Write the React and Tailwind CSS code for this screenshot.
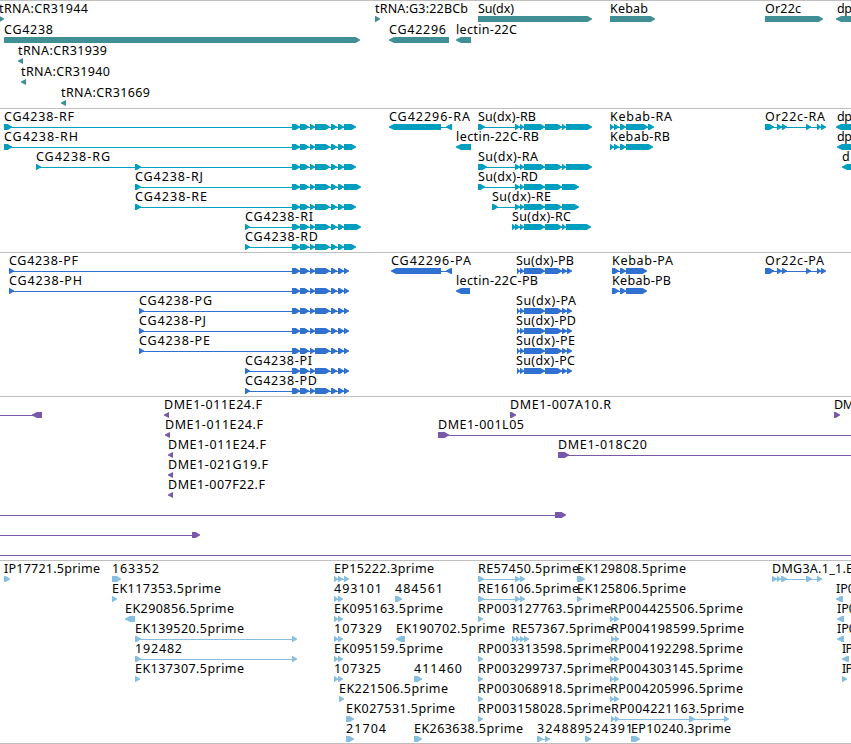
const ROW_HEIGHT = 20;

// Exons shared by every CG4238 isoform, without the last one
const CG4238 = [[292, 300], [300, 309], [310, 315], [315, 330], [331, 337], [338, 344]];
const CG4238_SHORT = [...CG4238, [344, 356]];
const CG4238_LONG = [...CG4238, [344, 361]];
const CG4238_CDS = [...CG4238, [344, 349]];

const SUDX = [[515, 520], [520, 524], [524, 545], [545, 562]];
const SUDX_CDS = [[517, 520], [520, 524], [524, 545], [545, 562], [562, 567], [567, 572]];
const OR22C = [[765, 774], [777, 782], [782, 787], [806, 811], [817, 821], [821, 826]];

// Feature: [row, label, label start, label end, blocks, strand]
const TRACKS = [
  {
    id: "gene",
    height: 107,
    rowHeight: 21,
    color: "#408f94",
    features: [
      [0, "tRNA:CR31944", -1, 88, [[-1, 4]]],
      [0, "tRNA:G3:22BCb", 375, 468, [[375, 380]]],
      [0, "Su(dx)", 478, 514, [[478, 592]]],
      [0, "Kebab", 610, 648, [[610, 655]]],
      [0, "Or22c", 765, 801, [[765, 823]]],
      [0, "dp", 837, 852, [[836, 870]], -1],
      [1, "CG4238", 4, 53, [[4, 360]]],
      [1, "CG42296", 389, 446, [[389, 449]], -1],
      [1, "lectin-22C", 456, 517, [[456, 471]], -1],
      [2, "tRNA:CR31939", 18, 107, [[18, 23]], -1],
      [3, "tRNA:CR31940", 21, 110, [[21, 26]], -1],
      [4, "tRNA:CR31669", 61, 150, [[61, 66]], -1],
    ],
  },
  {
    id: "transcript",
    height: 143,
    color: "#009fc0",
    features: [
      [0, "CG4238-RF", 4, 74, [[4, 12], ...CG4238_SHORT]],
      [1, "CG4238-RH", 4, 78, [[4, 12], ...CG4238_SHORT]],
      [2, "CG4238-RG", 36, 110, [[36, 41], [135, 141], ...CG4238_SHORT]],
      [3, "CG4238-RJ", 135, 203, [[135, 141], ...CG4238_LONG]],
      [4, "CG4238-RE", 135, 207, [[135, 141], ...CG4238_SHORT]],
      [5, "CG4238-RI", 245, 313, [[245, 250], ...CG4238_LONG]],
      [6, "CG4238-RD", 245, 318, [[245, 250], ...CG4238_SHORT]],
      [0, "CG42296-RA", 389, 470, [[389, 441], [446, 452]], -1],
      [1, "lectin-22C-RB", 456, 539, [[456, 471]], -1],
      [0, "Su(dx)-RB", 478, 536, [[478, 485], ...SUDX, [562, 566], [566, 592]]],
      [2, "Su(dx)-RA", 478, 538, [[478, 487], ...SUDX, [562, 566], [566, 592]]],
      [3, "Su(dx)-RD", 478, 538, [[478, 485], ...SUDX, [562, 579]]],
      [4, "Su(dx)-RE", 492, 551, [[492, 498], ...SUDX, [562, 579]]],
      [5, "Su(dx)-RC", 512, 571, [[512, 516], ...SUDX, [562, 566], [566, 591]]],
      [0, "Kebab-RA", 610, 672, [[610, 614], [614, 619], [620, 626], [626, 648], [648, 654]]],
      [1, "Kebab-RB", 610, 670, [[610, 614], [614, 619], [620, 626], [626, 653]]],
      [0, "Or22c-RA", 765, 825, OR22C],
      [0, "dp", 837, 852, [[836, 870]], -1],
      [1, "dp", 837, 852, [[837, 870]], -1],
      [2, "d", 842, 850, [[842, 870]], -1],
    ],
  },
  {
    id: "cds",
    height: 143,
    color: "#3070d0",
    features: [
      [0, "CG4238-PF", 9, 78, [[9, 14], ...CG4238_CDS]],
      [1, "CG4238-PH", 9, 82, [[9, 14], ...CG4238_CDS]],
      [2, "CG4238-PG", 139, 212, [[139, 144], ...CG4238_CDS]],
      [3, "CG4238-PJ", 139, 206, [[139, 144], ...CG4238_CDS]],
      [4, "CG4238-PE", 139, 210, [[139, 144], ...CG4238_CDS]],
      [5, "CG4238-PI", 245, 312, [[245, 250], ...CG4238_CDS]],
      [6, "CG4238-PD", 245, 317, [[245, 250], ...CG4238_CDS]],
      [0, "CG42296-PA", 391, 471, [[391, 441], [446, 452]], -1],
      [1, "lectin-22C-PB", 456, 538, [[456, 470]], -1],
      [0, "Su(dx)-PB", 516, 574, SUDX_CDS],
      [2, "Su(dx)-PA", 516, 576, SUDX_CDS],
      [3, "Su(dx)-PD", 516, 576, SUDX_CDS],
      [4, "Su(dx)-PE", 516, 575, SUDX_CDS],
      [5, "Su(dx)-PC", 516, 575, SUDX_CDS],
      [0, "Kebab-PA", 612, 673, [[612, 619], [620, 626], [626, 647]]],
      [1, "Kebab-PB", 612, 671, [[612, 619], [620, 626], [626, 647]]],
      [0, "Or22c-PA", 765, 824, OR22C],
    ],
  },
  {
    id: "bac",
    height: 163,
    color: "#7858a8",
    features: [
      [0, "", 0, 0, [[-20, -10], [32, 42]], -1],
      [0, "DME1-011E24.F", 164, 262, [[164, 169]], -1],
      [1, "DME1-011E24.F", 165, 263, [[165, 170]], -1],
      [2, "DME1-011E24.F", 168, 266, [[168, 173]], -1],
      [3, "DME1-021G19.F", 168, 268, [[168, 173]], -1],
      [4, "DME1-007F22.F", 168, 265, [[168, 173]], -1],
      [0, "DME1-007A10.R", 510, 611, [[510, 516]]],
      [1, "DME1-001L05", 438, 524, [[438, 449], [860, 870]]],
      [2, "DME1-018C20", 558, 647, [[558, 569], [860, 870]]],
      [0, "DM", 834, 854, [[834, 840]]],
      [5, "", 0, 0, [[-20, -10], [555, 566]]],
      [6, "", 0, 0, [[-20, -10], [192, 200]]],
      [7, "", 0, 0, [[-20, -10], [860, 870]]],
    ],
  },
  {
    id: "est",
    height: 182,
    color: "#88bfe0",
    features: [
      [0, "IP17721.5prime", 4, 100, [[4, 10]]],
      [0, "163352", 112, 159, [[112, 121]]],
      [1, "EK117353.5prime", 112, 221, [[112, 117]]],
      [2, "EK290856.5prime", 125, 234, [[125, 135]], -1],
      [3, "EK139520.5prime", 135, 244, [[135, 141], [292, 297]]],
      [4, "192482", 135, 182, [[135, 141], [292, 297]]],
      [5, "EK137307.5prime", 135, 244, [[135, 140]]],
      [0, "EP15222.3prime", 334, 434, [[334, 338], [338, 343], [344, 349]]],
      [1, "493101", 334, 382, [[334, 338], [338, 343]]],
      [2, "EK095163.5prime", 334, 443, [[334, 338], [338, 343]]],
      [3, "107329", 334, 382, [[334, 338], [338, 343]]],
      [4, "EK095159.5prime", 334, 443, [[334, 338], [338, 343]]],
      [5, "107325", 334, 381, [[334, 338], [338, 343]]],
      [6, "EK221506.5prime", 339, 448, [[339, 344]]],
      [7, "EK027531.5prime", 346, 455, [[346, 354]]],
      [8, "21704", 346, 386, [[346, 354]]],
      [1, "484561", 395, 443, [[395, 402]]],
      [3, "EK190702.5prime", 396, 505, [[396, 405]], -1],
      [5, "411460", 414, 462, [[414, 422]]],
      [8, "EK263638.5prime", 414, 523, [[414, 422]]],
      [0, "RE57450.5prime", 478, 579, [[478, 484], [515, 520], [520, 525]]],
      [1, "RE16106.5prime", 478, 579, [[478, 484], [515, 520], [520, 525]]],
      [2, "RP003127763.5prime", 478, 611, [[478, 483]]],
      [3, "RE57367.5prime", 512, 613, [[512, 516], [516, 520], [520, 524], [524, 529]]],
      [4, "RP003313598.5prime", 478, 611, [[478, 483]]],
      [5, "RP003299737.5prime", 478, 611, [[478, 483]]],
      [6, "RP003068918.5prime", 478, 611, [[478, 483]]],
      [7, "RP003158028.5prime", 478, 611, [[478, 483]]],
      [8, "324889", 537, 585, [[537, 543], [545, 550]]],
      [8, "524391", 585, 633, [[585, 591]]],
      [8, "EP10240.3prime", 631, 731, [[631, 640]]],
      [0, "EK129808.5prime", 577, 686, [[577, 585]]],
      [1, "EK125806.5prime", 577, 686, [[577, 582]]],
      [2, "RP004425506.5prime", 610, 743, [[610, 614], [614, 619]]],
      [3, "RP004198599.5prime", 611, 744, [[611, 615], [615, 619]]],
      [4, "RP004192298.5prime", 610, 743, [[610, 614], [614, 619]]],
      [5, "RP004303145.5prime", 610, 743, [[610, 614], [614, 619]]],
      [6, "RP004205996.5prime", 610, 743, [[610, 614], [614, 619]]],
      [7, "RP004221163.5prime", 611, 744, [[611, 615], [615, 619], [689, 695], [724, 729]]],
      [0, "DMG3A.1_1.E", 772, 853, [[772, 777], [777, 781], [781, 787], [806, 812], [817, 822]]],
      [1, "IP0", 836, 855, [[836, 843]], -1],
      [2, "IP0", 837, 856, [[837, 844]], -1],
      [3, "IP0", 837, 856, [[837, 844]], -1],
      [4, "IP", 842, 853, [[842, 849]], -1],
      [5, "IP", 842, 853, [[842, 847]]],
    ],
  },
];

// Block with a pointed, slightly rounded end in the direction of the strand
function blockPath(start, end, strand) {
  const head = Math.min(5, end - start);
  if (strand < 0) {
    return `M${end} 15H${start + head}L${start + 1} 17L${start} 17.6V18.4L${start + 1} 19L${start + head} 21H${end}Z`;
  }
  return `M${start} 15H${end - head + 0.6}L${end - 1} 17L${end} 17.6V18.4L${end - 1} 19L${end - head + 0.6} 21H${start}Z`;
}

function Feature({ feature, rowHeight }) {
  const [row, label, labelStart, labelEnd, blocks, strand = 1] = feature;
  const first = blocks[0][0];
  const last = blocks[blocks.length - 1][1];

  return (
    <g transform={`translate(0 ${row * rowHeight})`}>
      {blocks.length > 1 && (
        <rect x={first + 1} y={18} width={last - first - 2} height={1} />
      )}
      {blocks.map(([start, end]) => (
        <path key={start} d={blockPath(start, end, strand)} />
      ))}
      {label && (
        <text
          x={labelStart}
          y={12}
          textLength={labelEnd - labelStart}
          className="fill-black"
        >
          {label}
        </text>
      )}
    </g>
  );
}

function Track({ track }) {
  return (
    <section className="border-t border-[#c0c0c0]">
      <svg
        width="851"
        height={track.height}
        fill={track.color}
        className="block font-['Noto_Sans','DejaVu_Sans',sans-serif] text-[12.5px]"
      >
        {track.features.map((feature, i) => (
          <Feature
            key={i}
            feature={feature}
            rowHeight={track.rowHeight || ROW_HEIGHT}
          />
        ))}
      </svg>
    </section>
  );
}

export default function App() {
  return (
    <main className="flex flex-col w-[851px] h-[744px] overflow-hidden bg-white border-b border-[#c0c0c0]">
      {TRACKS.map((track) => (
        <Track key={track.id} track={track} />
      ))}
    </main>
  );
}
